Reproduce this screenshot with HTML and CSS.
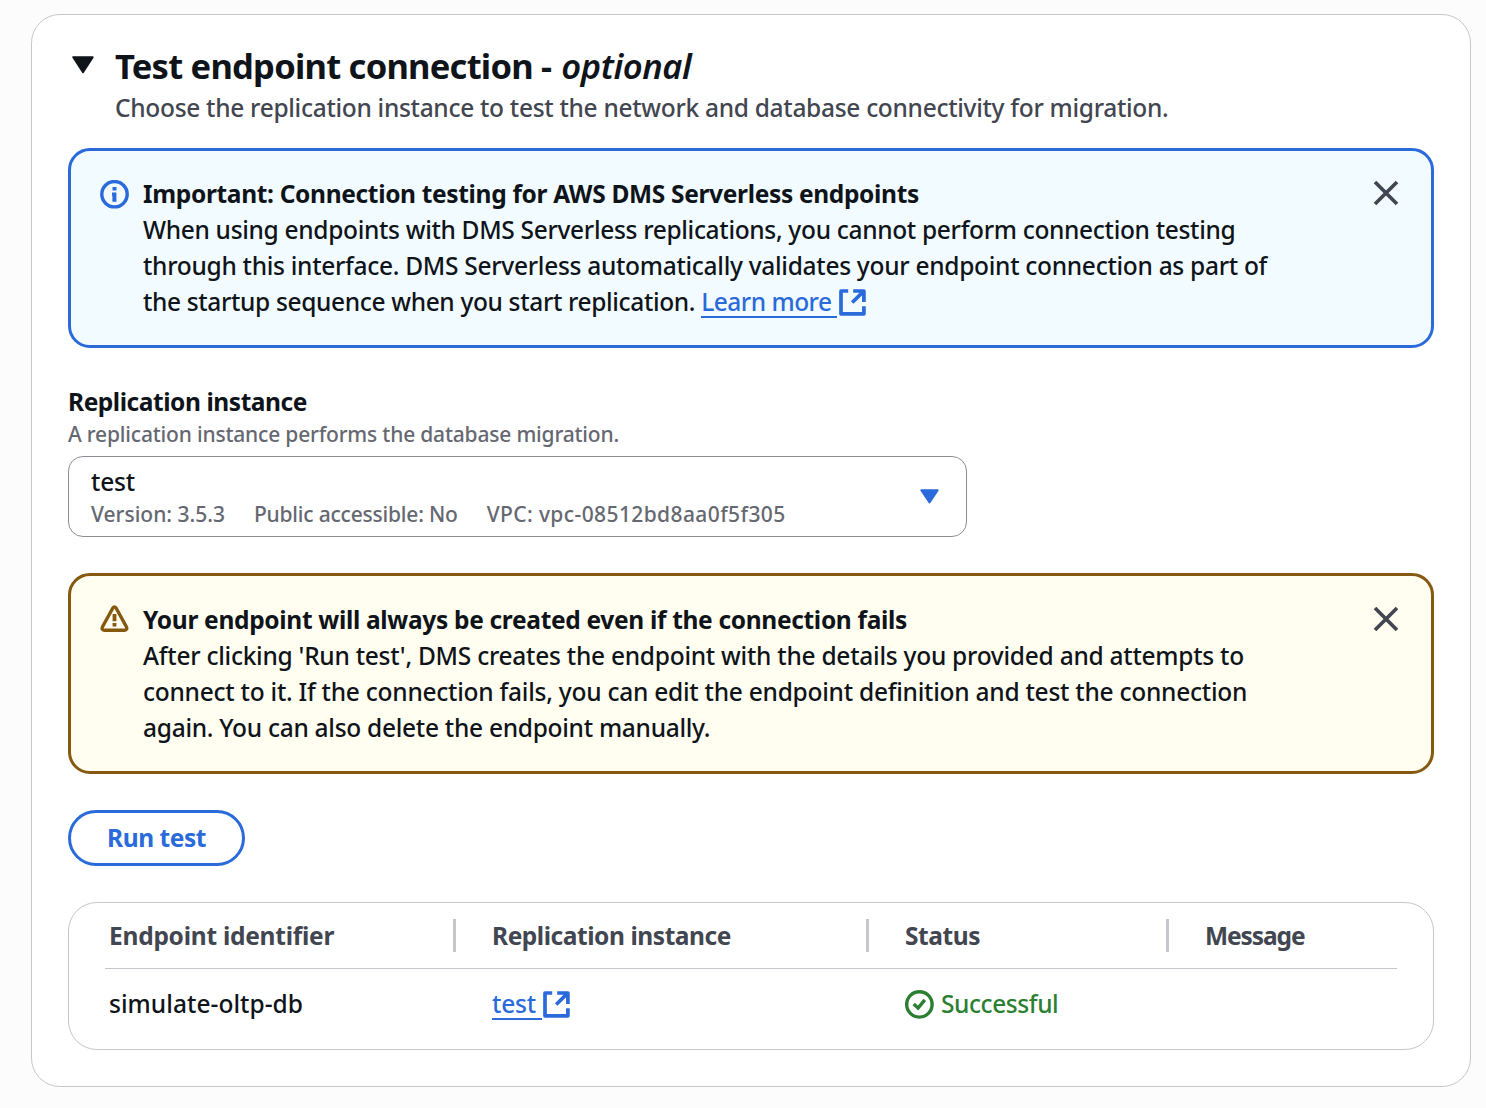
FILE: index.html
```html
<!DOCTYPE html>
<html lang="en">
<head>
<meta charset="utf-8">
<title>Test endpoint connection</title>
<link rel="stylesheet" href="styles.css">
</head>
<body>
<main class="card">
  <header class="card-header">
    <svg class="caret" width="22" height="18" viewBox="0 0 22 18"><path d="M1.3 1.2h19.4L11 16.3z" fill="#0f141a" stroke="#0f141a" stroke-width="2" stroke-linejoin="round"/></svg>
    <div class="heading">
      <h1><span class="h-main">Test endpoint connection -</span> <em>optional</em></h1>
      <p class="desc">Choose the replication instance to test the network and database connectivity for migration.</p>
    </div>
  </header>

  <section class="alert info">
    <svg class="alert-icon" width="29" height="29" viewBox="0 0 29 29"><circle cx="14.5" cy="14.2" r="12.7" fill="none" stroke="#2a6adb" stroke-width="3.4"/><path d="M12.500 7h4v3.600h-4zM12 12.600h4.400v9.200h-4v-6H12z" fill="#2a6adb"/></svg>
    <div class="alert-body">
      <h2 class="i1">Important: Connection testing for AWS DMS Serverless endpoints</h2>
      <p class="i2">When using endpoints with DMS Serverless replications, you cannot perform connection testing</p>
      <p class="i3">through this interface. DMS Serverless automatically validates your endpoint connection as part of</p>
      <p class="i4">the startup sequence when you start replication. <a class="link learn"><span>Learn more </span><svg width="27" height="27" viewBox="0 0 27 27" fill="none" stroke="#2a6adb" stroke-width="3.700"><path d="M9.200 2H2v22.800h22.900v-7.500" stroke-linejoin="round"/><path d="M14.200 2h10.700v11M24.500 2.400 13.200 13.500" stroke-linejoin="round"/></svg></a></p>
    </div>
    <svg class="close" width="26" height="26" viewBox="0 0 26 26"><path d="M2 2l22 22M24 2 2 24" stroke="#424650" stroke-width="3.700"/></svg>
  </section>

  <section class="field">
    <label class="label">Replication instance</label>
    <p class="hint">A replication instance performs the database migration.</p>
    <div class="select">
      <div>
        <div class="value">test</div>
        <div class="tags"><span class="t1">Version: 3.5.3</span><span class="t2">Public accessible: No</span><span class="t3">VPC: vpc-08512bd8aa0f5f305</span></div>
      </div>
      <svg class="select-caret" width="19" height="15" viewBox="0 0 19 15"><path d="M1.300 1.300h16.400L9.500 13.400z" fill="#2a6adb" stroke="#2a6adb" stroke-width="2" stroke-linejoin="round"/></svg>
    </div>
  </section>

  <section class="alert warning">
    <svg class="alert-icon" width="29" height="29" viewBox="0 0 29 29"><path d="M12.700 3.200q1.700-2.600 3.500 0L26.500 22q1 2.900-1.900 3.300H4.300Q1.400 24.900 2.400 22z" fill="none" stroke="#855910" stroke-width="3.400" stroke-linejoin="round"/><path d="M12.600 9h3.800v7.200h-3.800zM12.600 18h3.800v3.400h-3.800z" fill="#855910"/></svg>
    <div class="alert-body">
      <h2 class="w1">Your endpoint will always be created even if the connection fails</h2>
      <p class="w2">After clicking 'Run test', DMS creates the endpoint with the details you provided and attempts to</p>
      <p class="w3">connect to it. If the connection fails, you can edit the endpoint definition and test the connection</p>
      <p class="w4">again. You can also delete the endpoint manually.</p>
    </div>
    <svg class="close" width="26" height="26" viewBox="0 0 26 26"><path d="M2 2l22 22M24 2 2 24" stroke="#424650" stroke-width="3.700"/></svg>
  </section>

  <button class="run">Run test</button>

  <section class="table">
    <div class="row head">
      <div class="c-id">Endpoint identifier</div><div class="c-inst">Replication instance</div><div class="c-status">Status</div><div class="c-msg">Message</div>
    </div>
    <div class="row data">
      <div class="c-name">simulate-oltp-db</div>
      <div><a class="link test"><span>test </span><svg width="27" height="27" viewBox="0 0 27 27" fill="none" stroke="#2a6adb" stroke-width="3.700"><path d="M9.200 2H2v22.800h22.900v-7.500" stroke-linejoin="round"/><path d="M14.200 2h10.700v11M24.500 2.400 13.200 13.500" stroke-linejoin="round"/></svg></a></div>
      <div class="success"><svg width="29" height="29" viewBox="0 0 29 29" fill="none" stroke="#2b7f31"><circle cx="14.400" cy="14.400" r="12.700" stroke-width="3.400"/><path d="M8.700 14l4.400 4 6.700-8.200" stroke-width="3.400"/></svg><span>Successful</span></div>
      <div></div>
    </div>
  </section>
</main>
</body>
</html>
```
FILE: styles.css
```css
* { box-sizing: border-box; }
body {
  margin: 0;
  padding: 14px 15px 0 31px;
  height: 1108px;
  background: #fcfcfc;
  color: #0f141a;
  font: 500 24.5px/36px "Noto Sans", "Open Sans", sans-serif;
  white-space: nowrap;
}
h1, h2, p { margin: 0; font-weight: inherit; font-size: inherit; }
.card {
  width: 1440px;
  height: 1073px;
  padding: 28px 36px 0;
  background: #fff;
  border: 1px solid #c6c6cd;
  border-radius: 29px;
}
.card-header { display: flex; height: 105px; padding-left: 4px; }
.caret { margin: 13px 21px 0 0; flex: none; }
h1 { height: 47px; font-size: 34.5px; line-height: 46px; font-weight: 700; }
.h-main { letter-spacing: -0.76px; }
h1 em { font-weight: 600; letter-spacing: -0.45px; margin-left: 1px; }
.desc { color: #424650; letter-spacing: -0.3px; }

.alert {
  display: flex;
  width: 1366px;
  border: 3px solid;
  border-radius: 22px;
  padding-left: 29px;
}
.info { height: 200px; padding-top: 25px; border-color: #2a6adb; background: #f2fbff; }
.warning { height: 201px; padding-top: 26px; border-color: #855910; background: #fffef0; }
.alert-icon { margin: 4px 14px 0 0; flex: none; }
.warning .alert-icon { margin-top: 3px; }
.alert-body { flex: 1; }
.alert h2 { font-weight: 700; }
.close { margin: 4px 32.500px 0 0; flex: none; }
.i1 { letter-spacing: -0.33px; }
.i2 { letter-spacing: -0.32px; }
.i3 { letter-spacing: -0.29px; }
.i4 { letter-spacing: -0.35px; }
.w1 { letter-spacing: -0.32px; }
.w2 { letter-spacing: -0.26px; }
.w3 { letter-spacing: -0.25px; }
.w4 { letter-spacing: -0.28px; }

.link { color: #2a6adb; }
.link span { display: inline-block; height: 34px; line-height: 36px; border-bottom: 2px solid #2a6adb; white-space: pre; vertical-align: top; }
.link svg { margin: 5px 0 0 2px; vertical-align: top; }
.learn span { letter-spacing: -0.5px; }
.test span { letter-spacing: -0.2px; }
.test svg { margin-left: 1px; }

.field { margin-top: 37px; }
.label { display: block; height: 35px; font-weight: 700; line-height: 34px; letter-spacing: -0.44px; }
.hint { font-size: 21px; line-height: 29px; height: 36px; color: #656871; letter-spacing: -0.19px; }
.select {
  display: flex;
  justify-content: space-between;
  width: 899px;
  height: 81px;
  padding: 7px 27px 0 22px;
  border: 1px solid #8c8c94;
  border-radius: 15px;
}
.value { letter-spacing: -0.2px; }
.tags { display: flex; gap: 29px; font-size: 21px; line-height: 29px; color: #656871; }
.t1 { letter-spacing: 0; }
.t2 { letter-spacing: -0.2px; }
.t3 { letter-spacing: 0.4px; }
.select-caret { margin-top: 25px; }
.warning { margin-top: 36px; }

.run {
  display: block;
  width: 177px;
  height: 56px;
  margin: 36px 0;
  padding: 0;
  border: 3px solid #2a6adb;
  border-radius: 28px;
  background: #fff;
  color: #2a6adb;
  font: 700 24.5px/50px "Noto Sans", "Open Sans", sans-serif;
  letter-spacing: -0.44px;
}

.table { width: 1366px; height: 148px; padding: 0 36px; border: 1px solid #c6c6cd; border-radius: 29px; }
.row { display: grid; grid-template-columns: 351px 413px 300px 228px; }
.row > div { padding-left: 36px; }
.row > div:first-child { padding-left: 4px; }
.head { height: 66px; padding: 16px 0; border-bottom: 1px solid #c6c6cd; color: #424650; font-weight: 700; line-height: 33px; }
.head > div:not(:last-child) { border-right: 3px solid #c6c6cd; }
.c-id { letter-spacing: -0.25px; }
.c-inst, .c-status { letter-spacing: -0.44px; }
.c-msg { letter-spacing: -1.1px; }
.data { padding-top: 17px; }
.c-name { letter-spacing: 0.04px; }
.success { display: flex; gap: 7px; color: #2b7f31; letter-spacing: -0.42px; }
.success svg { margin-top: 4px; }
```
